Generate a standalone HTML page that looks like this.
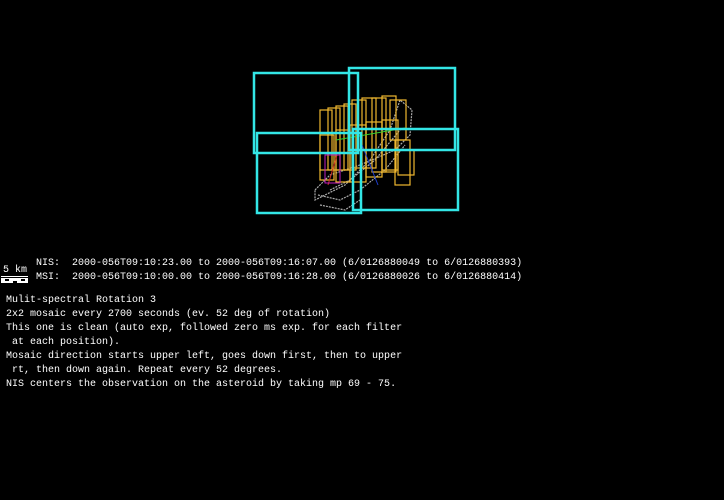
<!DOCTYPE html>
<html><head><style>
html,body{margin:0;padding:0;background:#000;width:724px;height:500px;overflow:hidden}
.t{position:absolute;left:0;color:#fff;font-family:"Liberation Mono",monospace;font-size:10px;line-height:14px;white-space:pre}
</style></head><body>
<svg width="724" height="500" style="position:absolute;left:0;top:0">
<g fill="none" stroke="#aaa" stroke-width="1.2" stroke-dasharray="2,1">
<path d="M315,190 L330,175 L360,165 L395,150 L410,135 L412,110 L400,100 L390,130 L370,160 L345,185 L315,200 Z"/>
<path d="M318,195 L340,200 L360,190 L385,170 L405,145"/>
<path d="M330,190 L350,180 L375,160 L400,130"/>
<path d="M320,205 L345,210 L360,200"/>
</g>
<g fill="none" stroke="#f0b830" stroke-width="1.2">
<rect x="320" y="110" width="12" height="60"/><rect x="328" y="108" width="12" height="62"/>
<rect x="336" y="106" width="12" height="64"/><rect x="344" y="104" width="12" height="66"/>
<rect x="352" y="100" width="14" height="68"/><rect x="362" y="98" width="14" height="70"/>
<rect x="372" y="98" width="14" height="74"/><rect x="382" y="96" width="14" height="76"/>
<rect x="320" y="135" width="14" height="45"/><rect x="336" y="130" width="14" height="52"/>
<rect x="350" y="125" width="16" height="57"/><rect x="366" y="122" width="16" height="55"/>
<rect x="382" y="120" width="16" height="50"/><rect x="395" y="140" width="15" height="45"/>
<rect x="398" y="150" width="16" height="25"/><rect x="390" y="100" width="16" height="40"/>
</g>
<path d="M336,140 L405,128" stroke="#30d030"/>
<path d="M362,145 L378,185" stroke="#2040d0"/>
<path d="M337,155 L328,185" stroke="#d03020"/>
<rect x="325" y="155" width="15" height="28" fill="none" stroke="#c020c0"/>
<g fill="none" stroke="#33e6e6" stroke-width="2.5">
<rect x="254" y="73" width="104" height="80"/>
<rect x="349" y="68" width="106" height="82"/>
<rect x="257" y="133" width="104" height="80"/>
<rect x="353" y="129" width="105" height="81"/>
</g>
<rect x="1" y="278" width="27" height="5" fill="#fff"/>
<g fill="#000"><rect x="5" y="279" width="4" height="2"/><rect x="13" y="281" width="4" height="2"/><rect x="21" y="279" width="4" height="2"/></g>
<rect x="1" y="276" width="27" height="1" fill="#fff"/>
</svg>
<div class="t" style="top:264px;left:3px">5 km</div>
<div class="t" style="top:257px;left:36px">NIS:  2000-056T09:10:23.00 to 2000-056T09:16:07.00 (6/0126880049 to 6/0126880393)
MSI:  2000-056T09:10:00.00 to 2000-056T09:16:28.00 (6/0126880026 to 6/0126880414)</div>
<div class="t" style="top:294px;left:6px">Mulit-spectral Rotation 3
2x2 mosaic every 2700 seconds (ev. 52 deg of rotation)
This one is clean (auto exp, followed zero ms exp. for each filter
 at each position).
Mosaic direction starts upper left, goes down first, then to upper
 rt, then down again. Repeat every 52 degrees.
NIS centers the observation on the asteroid by taking mp 69 - 75.</div>
</body></html>
